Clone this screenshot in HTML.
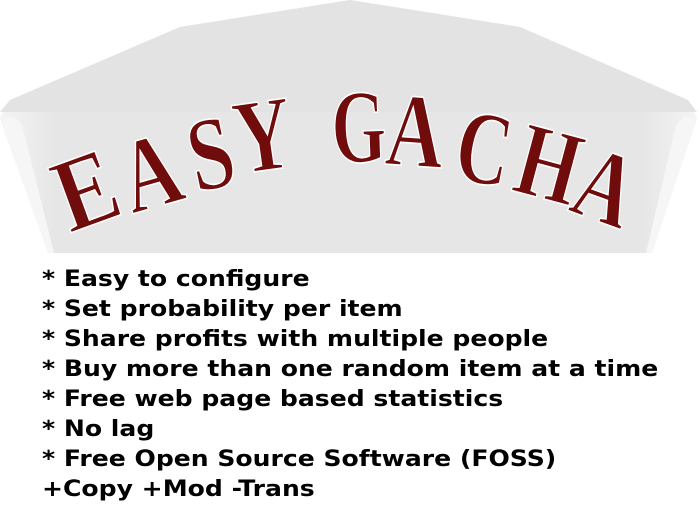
<!DOCTYPE html>
<html><head><meta charset="utf-8"><style>
html,body{margin:0;padding:0;background:#fff;width:700px;height:525px;overflow:hidden}
.t{position:absolute;left:42px;font-family:"DejaVu Sans",sans-serif;font-weight:bold;font-size:22px;color:#000;white-space:pre;line-height:30px;transform:scaleX(1.14);transform-origin:0 0}
</style></head><body>
<svg width="700" height="525" style="position:absolute;left:0;top:0">
<defs>
<linearGradient id="f" x1="0" y1="0" x2="1" y2="0">
<stop offset="0" stop-color="#f4f4f4"/><stop offset="0.08" stop-color="#e6e6e6"/><stop offset="0.92" stop-color="#e6e6e6"/><stop offset="1" stop-color="#f4f4f4"/></linearGradient>
</defs>
<polygon points="350,0 180,27 10,100 0,118 2,125 50,253 650,253 695,125 697,118 688,100 520,27" fill="url(#f)"/>
<polygon points="350,0 180,27 10,100 0,112 697,112 688,100 520,27" fill="#e3e3e3"/>
<polygon points="4,118 14,116 22,125 54,253 48,253 2,125" fill="#f6f6f6"/>
<polygon points="694,118 684,116 676,125 646,253 652,253 695,125" fill="#f6f6f6"/>
<g font-family="'Liberation Serif',serif" font-weight="bold" fill="#700c0c" stroke="#fff" stroke-width="1.5" font-size="100" text-anchor="middle">
<text transform="translate(98,223) rotate(-20) scale(0.9,1.05)">E</text>
<text transform="translate(160,206) rotate(-16) scale(0.8,1.05)">A</text>
<text transform="translate(218,188) rotate(-12) scale(0.8,1.05)">S</text>
<text transform="translate(268,170) rotate(-8) scale(0.8,1.05)">Y</text>
<text transform="translate(360,162) rotate(-2) scale(0.7,1.05)">G</text>
<text transform="translate(413,166) rotate(4) scale(0.8,1.05)">A</text>
<text transform="translate(478,183) rotate(10) scale(0.75,1.05)">C</text>
<text transform="translate(540,198) rotate(15) scale(0.8,1.05)">H</text>
<text transform="translate(594,220) rotate(20) scale(0.8,1.05)">A</text>
</g>
</svg>
<div class="t" style="top:265px">* Easy to configure
* Set probability per item
* Share profits with multiple people
* Buy more than one random item at a time
* Free web page based statistics
* No lag
* Free Open Source Software (FOSS)
+Copy +Mod -Trans</div>
</body></html>
